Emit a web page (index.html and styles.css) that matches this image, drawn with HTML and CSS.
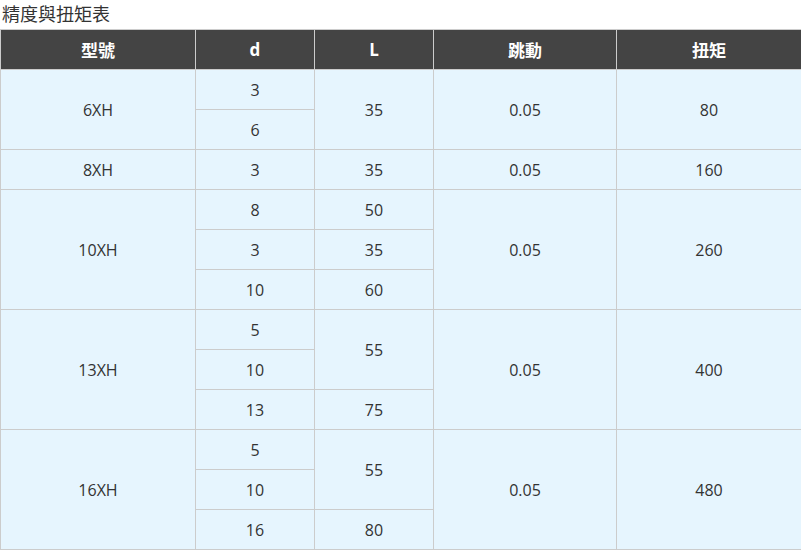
FILE: index.html
```html
<!DOCTYPE html>
<html lang="zh-Hant">
<head>
<meta charset="utf-8">
<title>精度與扭矩表</title>
<link rel="stylesheet" href="styles.css">
</head>
<body>
<h3 class="title">精度與扭矩表</h3>
<table class="spec">
  <colgroup>
    <col class="c1"><col class="c2"><col class="c3"><col class="c4"><col class="c5">
  </colgroup>
  <thead>
    <tr><th>型號</th><th>d</th><th>L</th><th>跳動</th><th>扭矩</th></tr>
  </thead>
  <tbody>
    <tr><td rowspan="2">6XH</td><td>3</td><td rowspan="2">35</td><td rowspan="2">0.05</td><td rowspan="2">80</td></tr>
    <tr><td>6</td></tr>
    <tr><td>8XH</td><td>3</td><td>35</td><td>0.05</td><td>160</td></tr>
    <tr><td rowspan="3">10XH</td><td>8</td><td>50</td><td rowspan="3">0.05</td><td rowspan="3">260</td></tr>
    <tr><td>3</td><td>35</td></tr>
    <tr><td>10</td><td>60</td></tr>
    <tr><td rowspan="3">13XH</td><td>5</td><td rowspan="2">55</td><td rowspan="3">0.05</td><td rowspan="3">400</td></tr>
    <tr><td>10</td></tr>
    <tr><td>13</td><td>75</td></tr>
    <tr><td rowspan="3">16XH</td><td>5</td><td rowspan="2">55</td><td rowspan="3">0.05</td><td rowspan="3">480</td></tr>
    <tr><td>10</td></tr>
    <tr><td>16</td><td>80</td></tr>
  </tbody>
</table>
</body>
</html>
```
FILE: styles.css
```css
html, body {
  margin: 0;
  padding: 0;
  background: #fff;
}
body {
  font-family: "Open Sans", "Noto Sans CJK TC", sans-serif;
  color: #333;
}
.title {
  margin: 0;
  padding: 1px 0 0 2px;
  height: 29px;
  box-sizing: border-box;
  font-size: 18px;
  font-weight: normal;
  line-height: 26px;
  color: #333;
}
.spec {
  border-collapse: collapse;
  table-layout: fixed;
  width: 801px;
}
.c1 { width: 195px; }
.c2 { width: 119px; }
.c3 { width: 119px; }
.c4 { width: 183px; }
.c5 { width: 185px; }
.spec th, .spec td {
  border: 1px solid #cccccc;
  padding: 0;
  text-align: center;
  vertical-align: middle;
  box-sizing: border-box;
}
.spec th {
  background: #444444;
  color: #fff;
  font-weight: bold;
  font-size: 17px;
  height: 40px;
}
.spec td {
  background: #e6f5fe;
  color: #333;
  font-size: 16px;
  height: 40px;
}
```
